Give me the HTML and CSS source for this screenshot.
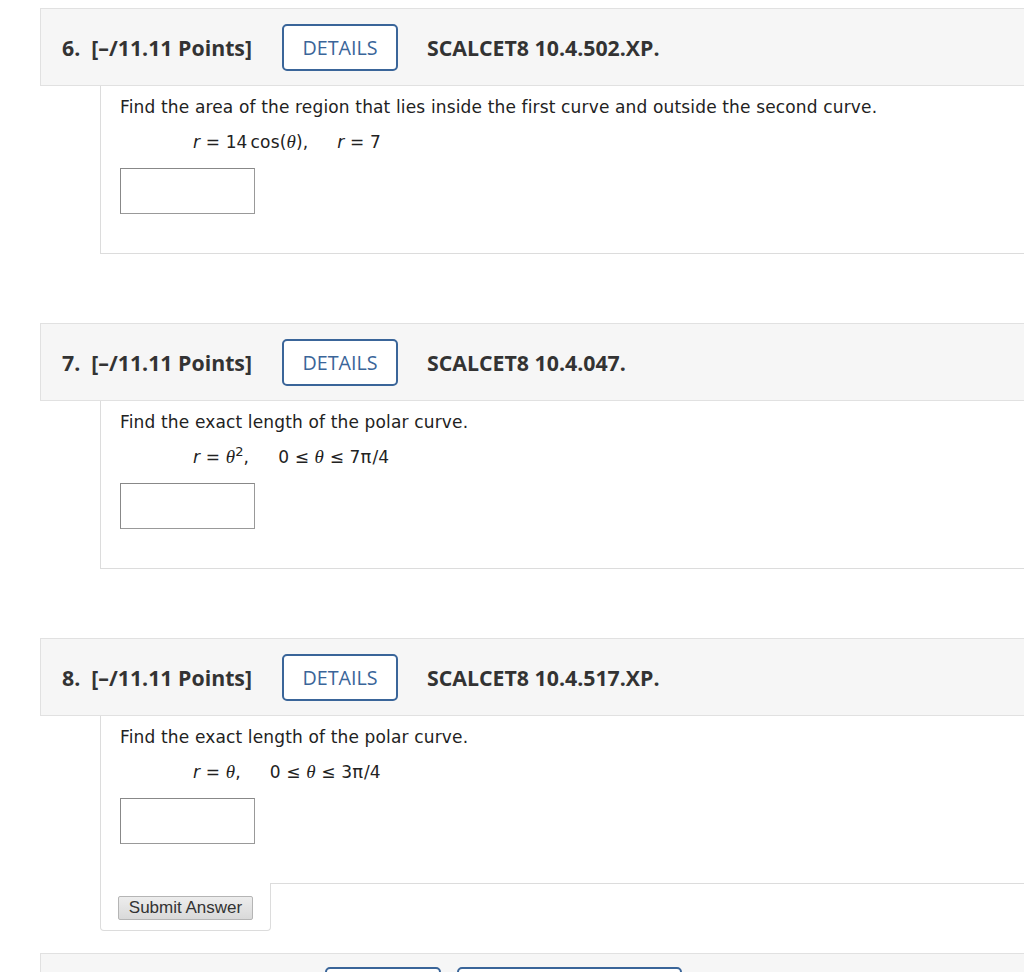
FILE: index.html
```html
<!DOCTYPE html>
<html>
<head>
<meta charset="utf-8">
<link rel="stylesheet" href="styles.css">
</head>
<body>
<div class="page">
  <div class="question">
    <div class="qhead">
      <span class="label"><span class="num">6.</span>[–/11.11 Points]</span>
      <span class="btn">DETAILS</span>
      <span class="code">SCALCET8 10.4.502.XP.</span>
    </div>
    <div class="qbody">
      <p class="prompt">Find the area of the region that lies inside the first curve and outside the second curve.</p>
      <p class="math"><i>r</i> = 14<span class="thin"></span>cos(<i class="th">θ</i>),<span class="sep"></span><i>r</i> = 7</p>
      <div class="answer"></div>
    </div>
  </div>

  <div class="question">
    <div class="qhead">
      <span class="label"><span class="num">7.</span>[–/11.11 Points]</span>
      <span class="btn">DETAILS</span>
      <span class="code">SCALCET8 10.4.047.</span>
    </div>
    <div class="qbody">
      <p class="prompt">Find the exact length of the polar curve.</p>
      <p class="math"><i>r</i> = <i class="th">θ</i><sup>2</sup>,<span class="sep"></span>0 ≤ <i class="th">θ</i> ≤ 7<span class="pi">π</span>/4</p>
      <div class="answer"></div>
    </div>
  </div>

  <div class="question last">
    <div class="qhead">
      <span class="label"><span class="num">8.</span>[–/11.11 Points]</span>
      <span class="btn">DETAILS</span>
      <span class="code">SCALCET8 10.4.517.XP.</span>
    </div>
    <div class="qbody">
      <p class="prompt">Find the exact length of the polar curve.</p>
      <p class="math"><i>r</i> = <i class="th">θ</i>,<span class="sep"></span>0 ≤ <i class="th">θ</i> ≤ 3<span class="pi">π</span>/4</p>
      <div class="answer"></div>
    </div>
    <div class="submit"><span class="submit-btn">Submit Answer</span></div>
  </div>

  <div class="question">
    <div class="qhead next">
      <span class="label wide"><span class="num">9.</span>[–/11.11 Points]</span>
      <span class="btn">DETAILS</span>
      <span class="btn prev">PREVIOUS ANSWERS</span>
    </div>
  </div>
</div>
</body>
</html>
```

FILE: styles.css
```css
html, body {
  margin: 0;
  padding: 0;
  background: #fff;
  overflow: hidden;
}
body {
  width: 1024px;
  height: 972px;
}
.page {
  padding: 8px 0 0 40px;
}
.question {
  margin-bottom: 69px;
}
.question.last {
  margin-bottom: 22px;
}
.qhead {
  box-sizing: border-box;
  height: 78px;
  background: #f6f6f6;
  border: 1px solid #e1e1e1;
  border-right: none;
  display: flex;
  align-items: center;
  padding-left: 21px;
  font-family: "Open Sans", sans-serif;
  color: #333;
}
.label {
  font-weight: 700;
  font-size: 21.3px;
  margin-right: 30px;
  white-space: nowrap;
}
.label.wide {
  min-width: 233px;
}
.num {
  margin-right: 11px;
}
.btn {
  box-sizing: border-box;
  flex: none;
  height: 47px;
  width: 116px;
  border: 2px solid #3a6599;
  border-radius: 5px;
  color: #3a6599;
  font-size: 19.7px;
  display: flex;
  align-items: center;
  justify-content: center;
  margin-right: 29px;
  background: #fff;
}
.btn.prev {
  width: 225px;
  margin-left: -13px;
}
.qhead.next {
  align-items: flex-start;
  padding-top: 13px;
}
.qhead.next .label {
  align-self: center;
}
.code {
  font-weight: 700;
  font-size: 21.3px;
  white-space: nowrap;
}
.qbody {
  margin-left: 60px;
  border-left: 1px solid #dcdcdc;
  border-bottom: 1px solid #dcdcdc;
  padding: 10px 0 39px 19px;
  font-family: "DejaVu Sans", Verdana, sans-serif;
  font-size: 17px;
  letter-spacing: 0.15px;
  color: #222;
}
.prompt {
  margin: 0;
  line-height: 22px;
  white-space: nowrap;
}
.math {
  margin: 13px 0 0 73px;
  line-height: 22px;
  height: 22px;
  white-space: nowrap;
}
.math i {
  font-style: oblique;
}
.math i.th {
  font-family: "Liberation Serif", "Times New Roman", serif;
  font-style: italic;
  font-size: 19px;
}
.math sup {
  font-size: 13px;
  line-height: 0;
  vertical-align: 7px;
}
.pi {
  font-size: 18px;
  letter-spacing: 1px;
}
.thin {
  display: inline-block;
  width: 3px;
}
.sep {
  display: inline-block;
  width: 29px;
}
.answer {
  box-sizing: border-box;
  margin-top: 15px;
  width: 135px;
  height: 46px;
  border: 1px solid #999;
  border-top-color: #888;
  border-left-color: #888;
  background: #fff;
}
.submit {
  position: relative;
  box-sizing: border-box;
  margin: -1px 0 0 60px;
  width: 171px;
  background: #fff;
  border: 1px solid #dcdcdc;
  border-top: none;
  border-radius: 0 0 4px 4px;
  padding: 13px 0 10px 17px;
}
.submit-btn {
  box-sizing: border-box;
  display: flex;
  align-items: center;
  justify-content: center;
  width: 135px;
  height: 24px;
  border: 1px solid #b5b5b5;
  border-radius: 2px;
  background: linear-gradient(#ededed, #d9d9d9);
  font-family: "Liberation Sans", Arial, sans-serif;
  font-size: 17px;
  color: #333;
}
```
